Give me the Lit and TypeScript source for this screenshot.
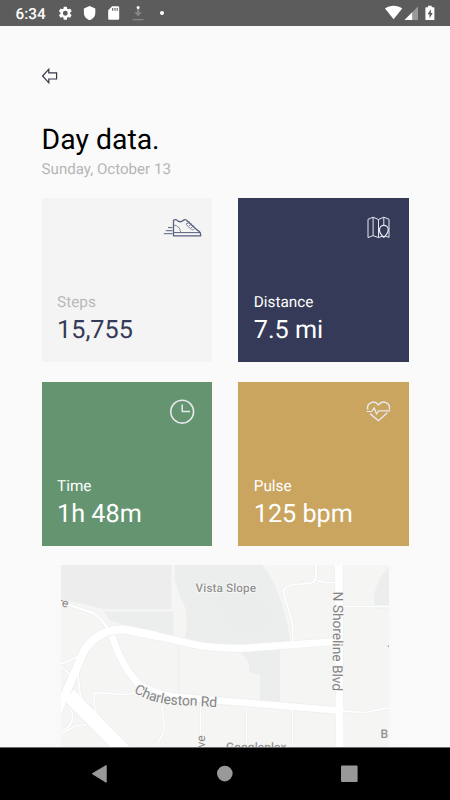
import { LitElement, html, svg, css } from "lit";
import { customElement, property } from "lit/decorators.js";
import { classMap } from "lit/directives/class-map.js";

@customElement("status-bar")
class StatusBar extends LitElement {
  static styles = css`
    :host { display: flex; justify-content: space-between; height: 26px; background: #5c5c5c; overflow: hidden; }
    .left, .right { display: flex; align-items: center; height: 26px; }
    .left { padding-left: 15.5px; }
    .right { padding-right: 14px; }
    .time { width: 40px; font: 500 15.3px/26px Roboto, sans-serif; color: #fff; padding-top: 2px; text-rendering: geometricPrecision; }
    svg { display: block; flex: none; }
  `;
  render() {
    return html`
      <div class="left">
        <span class="time">6:34</span>
        <svg width="130" height="26" viewBox="56 0 130 26" fill="#fff">
          <g transform="translate(57.2 5.1) scale(.675)">
            <path d="M19.14 12.94c.04-.3.06-.61.06-.94s-.02-.64-.07-.94l2.03-1.58a.49.49 0 0 0 .12-.61l-1.92-3.32a.49.49 0 0 0-.59-.22l-2.39.96a7 7 0 0 0-1.62-.94l-.36-2.54a.48.48 0 0 0-.48-.41h-3.84c-.24 0-.43.17-.47.41l-.36 2.54c-.59.24-1.13.57-1.62.94l-2.39-.96a.49.49 0 0 0-.59.22L2.74 8.87a.47.47 0 0 0 .12.61l2.03 1.58c-.05.3-.09.63-.09.94s.02.64.07.94l-2.03 1.58a.49.49 0 0 0-.12.61l1.92 3.32c.12.22.37.29.59.22l2.39-.96c.5.38 1.03.7 1.62.94l.36 2.54c.05.24.24.41.48.41h3.84c.24 0 .44-.17.47-.41l.36-2.54a7 7 0 0 0 1.62-.94l2.39.96c.22.08.47 0 .59-.22l1.92-3.32a.47.47 0 0 0-.12-.61zM12 15.6a3.6 3.6 0 1 1 0-7.2 3.6 3.6 0 0 1 0 7.2z" />
          </g>
          <path d="M89.6 6l5.7 2.5v4.4c0 3.3-2.4 6.1-5.7 7.1-3.3-1-5.7-3.8-5.7-7.1V8.5z" />
          <path d="M112.2 6.2h5.7q1.3 0 1.3 1.3v11q0 1.3-1.3 1.3h-8.4q-1.3 0-1.3-1.3v-8.3z" />
          <path d="M112.7 8v2.8M115 8v2.8M117.2 8v2.8" stroke="#5c5c5c" stroke-width="1.1" />
          <path d="M137.100 9h2v3.300h2.700l-3.700 3.900-3.700-3.900h2.700zM132.800 18.900h10.700v1.300h-10.700z" fill="#888" />
          <circle cx="138.100" cy="7.600" r="1.500" />
          <circle cx="162" cy="13" r="2" />
        </svg>
      </div>
      <div class="right">
        <svg width="52" height="26" viewBox="384 0 52 26" fill="#fff">
          <path d="M385 8.6C390 4.900 397.200 4.900 402.200 8.600L393.600 19.200z" />
          <path d="M418 6.500V20h-13.500z" fill="#999" />
          <path d="M412.200 12.300V20h-7.700z" />
          <path d="M428 5.800h3.700v1.500h2.100q.6 0 .6.600v11.500q0 .6-.6.600h-7.800q-.6 0-.6-.6V7.900q0-.6.6-.6h2z" />
          <path d="M430.900 9.300l-3.300 4.900h1.900v4l3.200-5.200h-1.900z" fill="#555" />
        </svg>
      </div>
    `;
  }
}

const icons: Record<string, unknown> = {
  steps: svg`
    <path d="M173.500 220.300V235.800H200.700Q200.700 231.700 197.700 230.400L186.200 220Q184.300 219 183.300 220.600Q179.800 223.200 176.800 220.100Q175.500 218.900 173.500 220.300z" stroke-width="1.300" />
    <path d="M173.500 232.600H200.500M168 227.600H172.500M165.800 230.700H172.500M163.800 233.700H172.500" />
    <path d="M173.500 225Q179.700 225.500 180.700 232.300M186.500 224.200L190 221.700M188.500 226.200L192 223.700M190.700 228.100L194.100 225.600M187.200 222.700Q185.300 224.600 187.500 226L191.600 229.600Q193.600 230.600 194.500 228.700" stroke-width=".7" />
  `,
  distance: svg`
    <path d="M368.500 219.300L373.600 217.200L379 219.500L384.300 217.200L389.500 219.300V237.400L384.800 235.600L379 237.600L373.600 235.600L368.500 237.600zM373.600 217.200V235.600M379 219.500V237.400M384.300 217.200V225" />
    <path d="M384.300 237.300Q379.600 232.800 380 229.800A4.400 4.400 0 0 1 388.800 229.800Q388.600 233.300 384.300 237.300z" fill="#343a57" stroke-width="1.300" />
  `,
  time: svg`
    <circle cx="182.200" cy="411.600" r="11.400" stroke-width="1.600" />
    <path d="M182.200 404.300V411.500H190" stroke-width="1.500" />
  `,
  pulse: svg`
    <path d="M368.400 409.600C366.500 403.300 374.500 399 378.900 404.900C383.200 399 391.500 403 389.800 409.600M370.500 413.500L378.900 420.600L387.900 412.700" stroke-width="1.400" />
    <path d="M367 411.400H372.300L374.800 407.600L377 414L378.900 410.800H390.800" stroke-width="1.200" />
  `,
};
const boxes: Record<string, string> = {
  steps: "162 208 48 40",
  distance: "358.500 208 48 40",
  time: "162 391.900 48 40",
  pulse: "358.500 391.900 48 40",
};

@customElement("stat-card")
class StatCard extends LitElement {
  @property() kind = "steps";
  @property() label = "";
  @property() value = "";
  static styles = css`
    :host { display: block; }
    .card { box-sizing: border-box; height: 164px; display: flex; flex-direction: column; justify-content: space-between; padding: 10px 2.3px 13px 15.5px; color: #fff; font-family: Roboto, sans-serif; text-rendering: geometricPrecision; }
    .steps { background: #f4f4f4; color: #343a57; }
    .distance { background: #343a57; }
    .time { background: #659471; }
    .pulse { background: #c9a55f; }
    .icon { display: block; align-self: flex-end; fill: none; stroke: #e8e9ee; stroke-width: 1; stroke-linejoin: round; }
    .steps .icon { stroke: #59607d; }
    .label { font-size: 15.3px; line-height: 20px; }
    .steps .label { color: #b9b9b9; }
    .value { font-size: 25.2px; line-height: 37px; }
  `;
  render() {
    return html`
      <div class=${classMap({ card: true, [this.kind]: true })}>
        <svg class="icon" width="48" height="40" viewBox=${boxes[this.kind]}>${icons[this.kind]}</svg>
        <div>
          <div class="label">${this.label}</div>
          <div class="value">${this.value}</div>
        </div>
      </div>
    `;
  }
}

@customElement("street-map")
class StreetMap extends LitElement {
  static styles = css`
    :host { display: flex; justify-content: center; background: #f9f9f9; }
    svg { display: block; }
    .edge { fill: none; stroke: #eef0f0; }
    .road { fill: none; stroke: #fff; }
    .park { fill: #eceeee; }
    .text { font-family: Roboto, sans-serif; fill: #858585; stroke: #f7f7f6; stroke-width: 2px; paint-order: stroke; stroke-linejoin: round; text-rendering: geometricPrecision; }
    .place { font-weight: 500; fill: #939393; }
  `;
  render() {
    const roads: [string, number][] = [
      ["M61 602L93.500 613.200Q103 620 109.500 632", 2.2],
      ["M61 664Q77 658 80 654M61 668Q71 672 71.500 682M78 665Q78 690 82.500 703Q84 709 90 714M61 731Q76 726 71.500 710M63 733L75 726L86 725", 1.6],
      ["M94 692.500L125 694.500Q134 694.500 139 689M94 692.500Q93 713 101 723L126 752M162 705L164.500 730L158.500 742V752M200.500 703V750M246.500 707V750M292.500 709V750", 1.4],
      ["M316 565V576Q315 582 311 583L292 585Q283 586 284 594L292.500 624V642M315.500 580L325 582.500H336M343 606.500H389M343 711L364 712.500L389 708", 1.6],
      ["M69 695L125 752", 14],
      ["M58 711L84.500 650Q99 628 125 629.500L157 636L203 646.300Q228 649.500 252 647.700L336 641.500", 7],
      ["M58 711L84.500 650Q99 628 125 629.500L157 636", 8],
      ["M112 636Q121 665 137.500 683Q151 693 173 696.500L224 701L338 710.500", 6.7],
      ["M338.800 562L339.700 752", 7.5],
    ];
    return html`
      <svg width="328" height="183" viewBox="61 565 328 183">
        <rect x="61" y="565" width="328" height="183" fill="#f5f5f4" />
        <path d="M61 565H171.300V609H104L61 599z" fill="#ededed" />
        <path class="park" d="M175 565H262Q281 586 290.500 641L280 646V702H260V675L249 672Q251 661 239 651L203 651L185 638Q190 610 180 597L175 580z" />
        <path class="park" d="M103.500 611.500H173.500V638L145 633L110 620z" />
        <path class="park" d="M389 567V608.500H374V595Q377 579 389 567z" />
        <path d="M217 601Q220 590 235 590L262 600Q279 611 270 624Q258 637 240 630Q221 619 217 601z" fill="#ebecec" />
        <path class="edge" d="M178.500 641V693" stroke-width="1.300" />
        ${roads.map(([d, w]) => svg`<path class="edge" d=${d} stroke-width=${w + 1.6} />`)}
        ${roads.map(([d, w]) => svg`<path class="road" d=${d} stroke-width=${w} />`)}
        <path id="charleston" d="M133.500 691.800Q150 703 174 704.800L225 707.500" fill="none" />
        <text class="text" font-size="14" textLength="86"><textPath href="#charleston" textLength="86">Charleston Rd</textPath></text>
        <text class="text place" x="195.600" y="592.300" font-size="11.800" textLength="60.500">Vista Slope</text>
        <text class="text" transform="translate(333.300 591.600) rotate(90.500)" font-size="13.800" textLength="99.500">N Shoreline Blvd</text>
        <text class="text place" x="226" y="751.300" font-size="11.800" textLength="60.500">Googleplex</text>
        <text class="text place" x="380.500" y="738.200" font-size="12">B</text>
        <text class="text" transform="translate(204.500 747.500) rotate(-90)" font-size="12">ve</text>
        <text class="text" transform="translate(61.300 606.300) rotate(14)" font-size="12">e</text>
        <path d="M61 600.300L63.300 601.300M388.300 645.500V647" stroke="#858585" />
      </svg>
    `;
  }
}

@customElement("nav-bar")
class NavBar extends LitElement {
  static styles = css`
    :host { display: flex; justify-content: center; box-sizing: border-box; height: 53px; background: #000; border-top: 1px solid #6b6b6b; }
  `;
  render() {
    return html`
      <svg width="450" height="52" viewBox="0 748 450 52" fill="#999">
        <path d="M106.200 765.500V782.300L92.300 773.700z" stroke="#999" stroke-linejoin="round" />
        <circle cx="224.800" cy="773.600" r="7.800" />
        <rect x="341" y="765.400" width="16.600" height="16.600" rx="1" />
      </svg>
    `;
  }
}

@customElement("app-root")
class AppRoot extends LitElement {
  static styles = css`
    :host { display: flex; flex-direction: column; width: 450px; height: 800px; background: #fafafa; overflow: hidden; font-family: Roboto, sans-serif; text-rendering: geometricPrecision; }
    status-bar, nav-bar { flex: none; }
    .page { flex: 1; min-height: 0; overflow: hidden; padding: 40px 41.4px 0 41.6px; }
    .back { display: block; width: 20px; height: 20px; fill: none; stroke: #343746; stroke-width: 1.2; }
    h1 { margin: 35px 0 0; font-size: 28.4px; line-height: 38px; font-weight: 400; color: #000; }
    .date { font-size: 15.1px; line-height: 20px; color: #b5b5b5; }
    .grid { display: grid; grid-template-columns: 1fr 1fr; gap: 19.6px 26.3px; margin-top: 19px; }
    street-map { margin-top: 19.4px; }
  `;
  render() {
    return html`
      <status-bar></status-bar>
      <main class="page">
        <svg class="back" viewBox="42.100 66 20 20"><path d="M42.700 76L48.900 69.200V72.800H56.700V79H48.900V82.800z" /></svg>
        <h1>Day data.</h1>
        <div class="date">Sunday, October 13</div>
        <div class="grid">
          <stat-card kind="steps" label="Steps" value="15,755"></stat-card>
          <stat-card kind="distance" label="Distance" value="7.5 mi"></stat-card>
          <stat-card kind="time" label="Time" value="1h 48m"></stat-card>
          <stat-card kind="pulse" label="Pulse" value="125 bpm"></stat-card>
        </div>
        <street-map></street-map>
      </main>
      <nav-bar></nav-bar>
    `;
  }
}
